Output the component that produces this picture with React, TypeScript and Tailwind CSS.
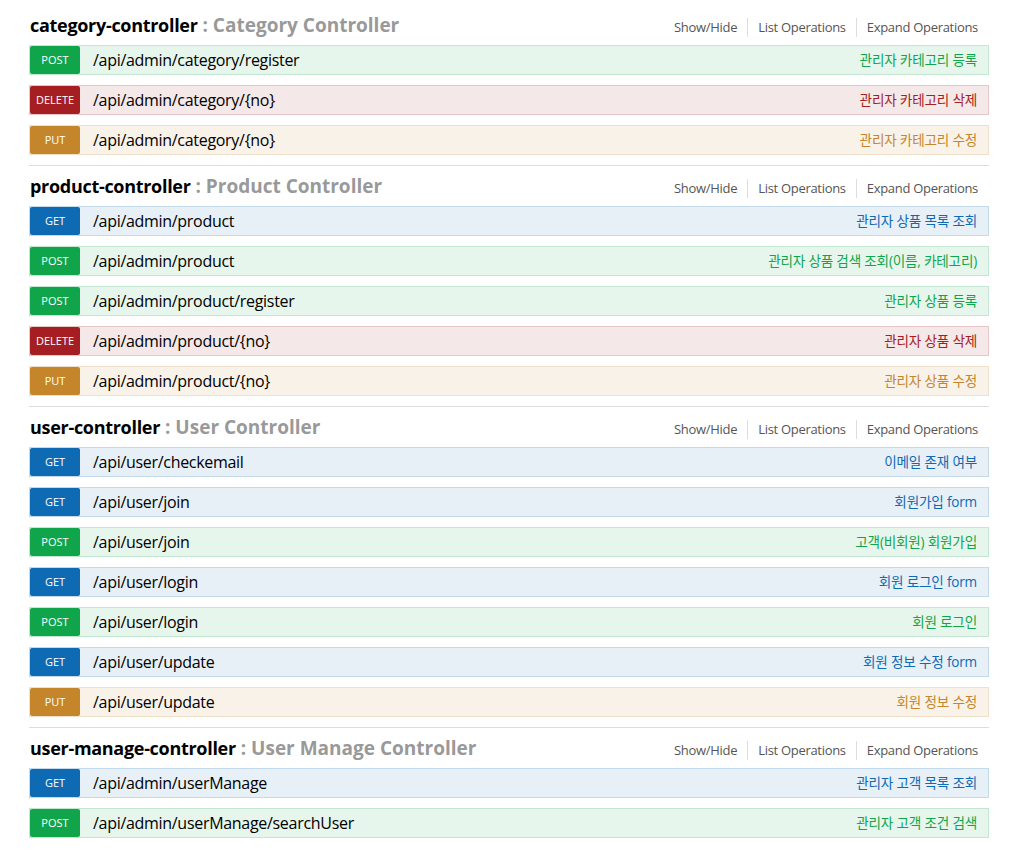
import React from "react";

type Method = "GET" | "POST" | "PUT" | "DELETE";

type Op = { method: Method; path: string; summary: string };

type Group = { name: string; title: string; ops: Op[] };

const STYLES: Record<Method, { row: string; badge: string; text: string }> = {
  GET: {
    row: "bg-[#e7f0f7] border-[#c3d9ec]",
    badge: "bg-[#0f6ab4]",
    text: "text-[#0f6ab4]",
  },
  POST: {
    row: "bg-[#e7f6ec] border-[#c3e8d1]",
    badge: "bg-[#10a54a]",
    text: "text-[#10a54a]",
  },
  PUT: {
    row: "bg-[#f9f2e9] border-[#f0e0ca]",
    badge: "bg-[#c5862b]",
    text: "text-[#c5862b]",
  },
  DELETE: {
    row: "bg-[#f5e8e8] border-[#e8c6c7]",
    badge: "bg-[#a41e22]",
    text: "text-[#a41e22]",
  },
};

const GROUPS: Group[] = [
  {
    name: "category-controller",
    title: "Category Controller",
    ops: [
      { method: "POST", path: "/api/admin/category/register", summary: "관리자 카테고리 등록" },
      { method: "DELETE", path: "/api/admin/category/{no}", summary: "관리자 카테고리 삭제" },
      { method: "PUT", path: "/api/admin/category/{no}", summary: "관리자 카테고리 수정" },
    ],
  },
  {
    name: "product-controller",
    title: "Product Controller",
    ops: [
      { method: "GET", path: "/api/admin/product", summary: "관리자 상품 목록 조회" },
      { method: "POST", path: "/api/admin/product", summary: "관리자 상품 검색 조회(이름, 카테고리)" },
      { method: "POST", path: "/api/admin/product/register", summary: "관리자 상품 등록" },
      { method: "DELETE", path: "/api/admin/product/{no}", summary: "관리자 상품 삭제" },
      { method: "PUT", path: "/api/admin/product/{no}", summary: "관리자 상품 수정" },
    ],
  },
  {
    name: "user-controller",
    title: "User Controller",
    ops: [
      { method: "GET", path: "/api/user/checkemail", summary: "이메일 존재 여부" },
      { method: "GET", path: "/api/user/join", summary: "회원가입 form" },
      { method: "POST", path: "/api/user/join", summary: "고객(비회원) 회원가입" },
      { method: "GET", path: "/api/user/login", summary: "회원 로그인 form" },
      { method: "POST", path: "/api/user/login", summary: "회원 로그인" },
      { method: "GET", path: "/api/user/update", summary: "회원 정보 수정 form" },
      { method: "PUT", path: "/api/user/update", summary: "회원 정보 수정" },
    ],
  },
  {
    name: "user-manage-controller",
    title: "User Manage Controller",
    ops: [
      { method: "GET", path: "/api/admin/userManage", summary: "관리자 고객 목록 조회" },
      { method: "POST", path: "/api/admin/userManage/searchUser", summary: "관리자 고객 조건 검색" },
    ],
  },
];

function OpRow({ op }: { op: Op }) {
  const s = STYLES[op.method];
  return (
    <div className={`flex h-[30px] items-center border ${s.row}`}>
      <span
        className={`flex h-full w-[50px] shrink-0 items-center justify-center rounded-[2px] text-[11px] text-white ${s.badge}`}
      >
        {op.method}
      </span>
      <span className="ml-[13px] text-[16px] tracking-[-0.3px] text-black">{op.path}</span>
      <span className={`ml-auto pr-[11px] text-[13.6px] tracking-[-0.2px] ${s.text}`}>
        {op.summary}
      </span>
    </div>
  );
}

function Resource({ group, last }: { group: Group; last: boolean }) {
  return (
    <section className={last ? "" : "border-b border-[#dddddd] pb-[10px]"}>
      <div className="flex h-[40px] items-center justify-between">
        <h2 className="pl-px text-[18px] font-bold tracking-[-0.3px] text-black">
          {group.name}
          <span className="text-[19px] tracking-normal text-[#999999]"> : {group.title}</span>
        </h2>
        <ul className="flex items-center pr-[11px] pt-[5px] text-[13px] tracking-[-0.3px] text-[#555555]">
          <li className="px-[10px]">Show/Hide</li>
          <li className="border-l border-[#dddddd] px-[10px]">List Operations</li>
          <li className="border-l border-[#dddddd] pl-[10px]">Expand Operations</li>
        </ul>
      </div>
      <div className="flex flex-col gap-[10px]">
        {group.ops.map((op, i) => (
          <OpRow key={i} op={op} />
        ))}
      </div>
    </section>
  );
}

export default function App() {
  return (
    <div
      className="min-h-screen bg-white pt-[5px]"
      style={{ fontFamily: '"Open Sans", "Noto Sans CJK KR", sans-serif' }}
    >
      <div className="ml-[29px] w-[960px]">
        {GROUPS.map((g, i) => (
          <Resource key={g.name} group={g} last={i === GROUPS.length - 1} />
        ))}
      </div>
    </div>
  );
}
